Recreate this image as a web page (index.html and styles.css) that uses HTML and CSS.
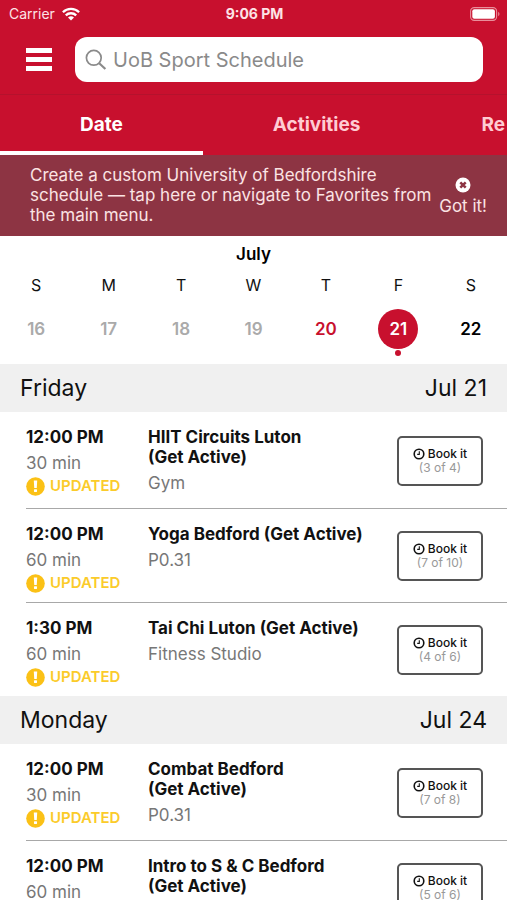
FILE: index.html
```html
<!DOCTYPE html>
<html lang="en">
<head>
<meta charset="utf-8">
<meta name="viewport" content="width=device-width, initial-scale=1">
<title>UoB Sport Schedule</title>
<link rel="stylesheet" href="styles.css">
</head>
<body>
<svg class="sprite" aria-hidden="true">
  <symbol id="clock" viewBox="0 0 12 12">
    <circle cx="6" cy="6" r="4.8" fill="none" stroke="currentColor" stroke-width="1.6"/>
    <path d="M6.3 3.2v3.2H4.2" fill="none" stroke="currentColor" stroke-width="1.1"/>
  </symbol>
  <symbol id="alert" viewBox="0 0 20 20">
    <circle cx="10" cy="10" r="9.8" fill="#fbc116"/>
    <path d="M8.2 3.8h3.6l-.5 7.8H8.7z" fill="#fff"/>
    <rect x="8.4" y="12.8" width="3.2" height="2.9" rx=".5" fill="#fff"/>
  </symbol>
</svg>
<div class="screen">
  <header class="top">
    <div class="status">
      <span class="carrier">Carrier
        <svg class="wifi" viewBox="0 0 18 14" aria-hidden="true">
          <g fill="none" stroke="#fff" stroke-width="2.3">
            <path d="M.9 5.2a11.5 11.5 0 0 1 16.2 0"/>
            <path d="M3.8 8.4a7.4 7.4 0 0 1 10.4 0"/>
          </g>
          <path d="M9 13.6 6 10.6a4.3 4.3 0 0 1 6 0z" fill="#fff"/>
        </svg>
      </span>
      <span class="clock">9:06 PM</span>
      <svg class="battery" viewBox="0 0 30 14" aria-hidden="true">
        <rect x=".6" y=".6" width="26" height="12.8" rx="3.6" fill="none" stroke="#e98f9b" stroke-width="1.1"/>
        <rect x="2.3" y="2.3" width="22.6" height="9.4" rx="2" fill="#fff"/>
        <path d="M28.2 4.8v4.4c1.7-.7 1.7-3.7 0-4.4z" fill="#e98f9b"/>
      </svg>
    </div>
    <div class="nav">
      <button class="menu" aria-label="Menu"><span></span><span></span><span></span></button>
      <label class="search">
        <svg viewBox="0 0 22 22" aria-hidden="true">
          <circle cx="8.8" cy="8.8" r="7.4" fill="none" stroke="#8a8a8a" stroke-width="1.7"/>
          <path d="M14.2 14.2 20.4 20" stroke="#8a8a8a" stroke-width="2.2"/>
        </svg>
        <input type="search" placeholder="UoB Sport Schedule" aria-label="Search">
      </label>
    </div>
  </header>
  <nav class="tabs">
    <a class="tab active" href="#date">Date</a>
    <a class="tab" href="#activities">Activities</a>
    <a class="tab last" href="#re">Re</a>
  </nav>
  <section class="banner">
    <p>Create a custom University of Bedfordshire schedule — tap here or navigate to Favorites from the main menu.</p>
    <button class="dismiss">
      <svg viewBox="0 0 16 16" aria-hidden="true">
        <circle cx="8" cy="8" r="7.5" fill="#fff"/>
        <path d="m5.3 5.3 5.4 5.4m0-5.4-5.4 5.4" stroke="#8d3443" stroke-width="2.5"/>
      </svg>
      Got it!
    </button>
  </section>
  <section class="calendar">
    <h2>July</h2>
    <div class="week names">
      <span>S</span><span>M</span><span>T</span><span>W</span><span>T</span><span>F</span><span>S</span>
    </div>
    <div class="week days">
      <button class="past">16</button><button class="past">17</button><button class="past">18</button><button class="past">19</button><button class="today">20</button><button class="selected">21</button><button>22</button>
    </div>
  </section>
  <main class="schedule">
    <h3 class="day"><span>Friday</span><span>Jul 21</span></h3>
    <ul>
      <li class="event">
        <div class="when"><strong>12:00 PM</strong><span>30 min</span><em><svg aria-hidden="true"><use href="#alert"/></svg>UPDATED</em></div>
        <div class="what"><strong>HIIT Circuits Luton<br>(Get Active)</strong><span>Gym</span></div>
        <button class="book"><span><svg aria-hidden="true"><use href="#clock"/></svg>Book it</span><small>(3 of 4)</small></button>
      </li>
      <li class="event">
        <div class="when"><strong>12:00 PM</strong><span>60 min</span><em><svg aria-hidden="true"><use href="#alert"/></svg>UPDATED</em></div>
        <div class="what"><strong>Yoga Bedford (Get Active)</strong><span>P0.31</span></div>
        <button class="book"><span><svg aria-hidden="true"><use href="#clock"/></svg>Book it</span><small>(7 of 10)</small></button>
      </li>
      <li class="event">
        <div class="when"><strong>1:30 PM</strong><span>60 min</span><em><svg aria-hidden="true"><use href="#alert"/></svg>UPDATED</em></div>
        <div class="what"><strong>Tai Chi Luton (Get Active)</strong><span>Fitness Studio</span></div>
        <button class="book"><span><svg aria-hidden="true"><use href="#clock"/></svg>Book it</span><small>(4 of 6)</small></button>
      </li>
    </ul>
    <h3 class="day"><span>Monday</span><span>Jul 24</span></h3>
    <ul>
      <li class="event">
        <div class="when"><strong>12:00 PM</strong><span>30 min</span><em><svg aria-hidden="true"><use href="#alert"/></svg>UPDATED</em></div>
        <div class="what"><strong>Combat Bedford<br>(Get Active)</strong><span>P0.31</span></div>
        <button class="book"><span><svg aria-hidden="true"><use href="#clock"/></svg>Book it</span><small>(7 of 8)</small></button>
      </li>
      <li class="event">
        <div class="when"><strong>12:00 PM</strong><span>60 min</span></div>
        <div class="what"><strong>Intro to S &amp; C Bedford<br>(Get Active)</strong></div>
        <button class="book"><span><svg aria-hidden="true"><use href="#clock"/></svg>Book it</span><small>(5 of 6)</small></button>
      </li>
    </ul>
  </main>
</div>
</body>
</html>
```
FILE: styles.css
```css
* { box-sizing: border-box; }

body {
  margin: 0;
  background: #fff;
  color: #111;
  font: 17px/20px Inter, "Liberation Sans", sans-serif;
}

button {
  margin: 0;
  padding: 0;
  border: 0;
  background: none;
  color: inherit;
  font: inherit;
}

h2, h3, p, ul { margin: 0; padding: 0; }
ul { list-style: none; }
svg { display: block; flex: none; }
.sprite { position: absolute; width: 0; height: 0; }

.screen {
  display: flex;
  flex-direction: column;
  height: 100vh;
  overflow: hidden;
}
.screen > * { flex: none; }

.top {
  background: #c8102e;
  color: #fff;
  border-bottom: 1px solid #b5122d;
}

.status {
  display: grid;
  grid-template-columns: 1fr auto 1fr;
  align-items: center;
  height: 28px;
  padding: 0 7px 0 9px;
  font-size: 14px;
}
.carrier { display: flex; align-items: center; gap: 7px; color: #fde3e6; }
.wifi { width: 18px; height: 14px; }
.clock { font-weight: 700; color: #fde3e6; }
.battery { width: 30px; height: 14px; justify-self: end; }

.nav {
  display: flex;
  align-items: center;
  gap: 23px;
  padding: 9px 24px 12px 26px;
}
.menu { display: grid; gap: 4px; width: 26px; }
.menu span { height: 5px; background: #fff; }
.search {
  flex: 1;
  display: flex;
  align-items: center;
  gap: 6px;
  height: 45px;
  padding: 0 10px;
  border-radius: 12px;
  background: #fff;
}
.search svg { width: 22px; height: 22px; }
.search input {
  flex: 1;
  min-width: 0;
  padding: 0;
  border: 0;
  outline: 0;
  background: none;
  color: #111;
  font: 20px/24px Inter, "Liberation Sans", sans-serif;
}
.search input::placeholder { color: #8a8a8a; opacity: 1; }

.tabs { display: flex; height: 60px; overflow: hidden; background: #c8102e; }
.tab {
  flex: none;
  padding: 3px 70px 0;
  border-bottom: 4px solid transparent;
  color: #ffccd3;
  font-size: 19px;
  font-weight: 700;
  line-height: 56px;
  text-align: center;
  text-decoration: none;
}
.tab.active { width: 40%; padding: 3px 0 0; border-color: #fff; color: #fff; line-height: 53px; }
.tab:not(.active) { line-height: 53px; }
.tab.last { padding: 3px 51px 0; }

.banner {
  display: flex;
  align-items: center;
  justify-content: space-between;
  gap: 4px;
  padding: 10px 20px 11px 30px;
  background: #8d3443;
  color: #fbe3e3;
}
.banner p { flex: 1; }
.dismiss { display: grid; justify-items: center; gap: 3px; padding-top: 2px; white-space: nowrap; }
.dismiss svg { width: 16px; height: 16px; }

.calendar { padding: 8px 0 15px; }
.calendar h2 { font-size: 17px; line-height: 20px; font-weight: 600; color: #000; text-align: center; }
.week { display: grid; grid-template-columns: repeat(7, 1fr); justify-items: center; }
.names { padding-top: 11px; font-size: 16px; }
.days { padding-top: 14px; }
.days button { position: relative; width: 40px; height: 40px; border-radius: 50%; color: #000; font-weight: 600; }
.days .past { color: #aaa; }
.days .today { color: #c8102e; }
.days .selected { background: #c8102e; color: #fff; }
.days .selected::after {
  content: "";
  position: absolute;
  top: 41px;
  left: 17px;
  width: 6px;
  height: 6px;
  border-radius: 50%;
  background: #c8102e;
}

.screen .schedule { flex: 1; min-height: 0; overflow: hidden auto; scrollbar-width: none; }
.day {
  display: flex;
  justify-content: space-between;
  padding: 0 20px;
  background: #f0f0f0;
  font-size: 23px;
  line-height: 48px;
  font-weight: 400;
}

.event {
  display: grid;
  grid-template-columns: 122px 1fr 86px;
  align-items: start;
  min-height: 93px;
  margin-left: 26px;
  padding: 15px 24px 8px 0;
  border-bottom: 1px solid #a8a8a8;
}
.event:last-child { border-bottom: 0; }
.event strong, .when > span, .what > span { display: block; }
.event strong { font-weight: 700; color: #111; }
.when > span, .what > span { margin-top: 6px; color: #777; }
.what { padding-bottom: 7px; }
.when em {
  display: flex;
  align-items: center;
  gap: 5px;
  margin-top: 2px;
  color: #fbcb2a;
  font-size: 15px;
  line-height: 22px;
  font-style: normal;
  font-weight: 600;
}
.when svg { width: 19px; height: 19px; }

.book {
  align-self: center;
  display: grid;
  align-content: center;
  justify-items: center;
  height: 50px;
  margin-top: -6px;
  border: 2px solid #555;
  border-radius: 5px;
  font-size: 12px;
  line-height: 14px;
}
.book span { display: flex; align-items: center; gap: 3px; font-weight: 500; }
.book svg { width: 12px; height: 12px; }
.book small { color: #999; font-size: 12px; }
```
